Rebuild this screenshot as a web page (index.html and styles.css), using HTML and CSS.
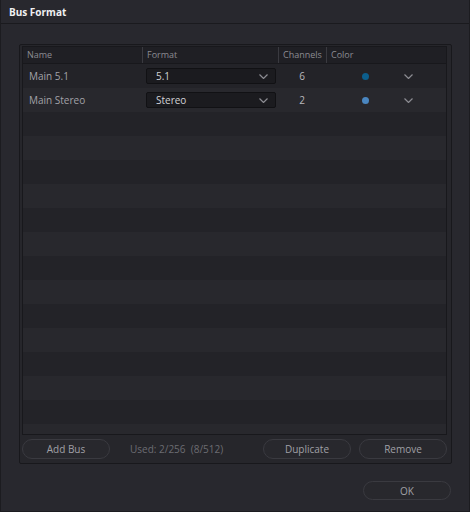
FILE: index.html
```html
<!DOCTYPE html>
<html>
<head>
<meta charset="utf-8">
<link rel="stylesheet" href="styles.css">
</head>
<body>
<div class="window">
  <div class="titlebar">Bus Format</div>
  <div class="content">
    <div class="panel">
      <div class="table">
        <div class="thead">
          <div class="th">Name</div>
          <div class="th">Format</div>
          <div class="th">Channels</div>
          <div class="th">Color</div>
        </div>
        <div class="tbody">
          <div class="row">
            <div class="cell name">Main 5.1</div>
            <div class="cell"><div class="combo"><span>5.1</span><svg class="chev" width="9" height="5" viewBox="0 0 9 5"><path d="M0.5 0.5 L4.5 4.5 L8.5 0.5" fill="none" stroke="#8c8c92" stroke-width="1.2"/></svg></div></div>
            <div class="cell num">6</div>
            <div class="cell color"><span class="dot dark"></span><svg class="chev" width="9" height="5" viewBox="0 0 9 5"><path d="M0.5 0.5 L4.5 4.5 L8.5 0.5" fill="none" stroke="#8c8c92" stroke-width="1.2"/></svg></div>
          </div>
          <div class="row">
            <div class="cell name">Main Stereo</div>
            <div class="cell"><div class="combo"><span>Stereo</span><svg class="chev" width="9" height="5" viewBox="0 0 9 5"><path d="M0.5 0.5 L4.5 4.5 L8.5 0.5" fill="none" stroke="#8c8c92" stroke-width="1.2"/></svg></div></div>
            <div class="cell num">2</div>
            <div class="cell color"><span class="dot light"></span><svg class="chev" width="9" height="5" viewBox="0 0 9 5"><path d="M0.5 0.5 L4.5 4.5 L8.5 0.5" fill="none" stroke="#8c8c92" stroke-width="1.2"/></svg></div>
          </div>
          <div class="row"></div><div class="row"></div><div class="row"></div>
          <div class="row"></div><div class="row"></div><div class="row"></div>
          <div class="row"></div><div class="row"></div><div class="row"></div>
          <div class="row"></div><div class="row"></div><div class="row"></div>
          <div class="row"></div><div class="row"></div>
        </div>
      </div>
      <div class="actions">
        <button class="btn add">Add Bus</button>
        <span class="used">Used: 2/256&nbsp; (8/512)</span>
        <button class="btn dup">Duplicate</button>
        <button class="btn rem">Remove</button>
      </div>
    </div>
    <div class="footer">
      <button class="btn ok">OK</button>
    </div>
  </div>
</div>
</body>
</html>
```

FILE: styles.css
```css
* { box-sizing: border-box; }

html, body {
  margin: 0;
  padding: 0;
  background: #28282e;
}

body {
  font-family: "Open Sans", "Noto Sans", sans-serif;
  font-size: 10px;
  color: #a2a2a8;
}

.window {
  width: 470px;
  height: 512px;
  background: #28282e;
  border-left: 1px solid #1c1c20;
  border-right: 1px solid #1c1c20;
  border-bottom: 1px solid #1c1c20;
  display: flex;
  flex-direction: column;
  overflow: hidden;
}

.titlebar {
  height: 24px;
  flex: none;
  padding: 5px 0 0 8px;
  background: #28282e;
  border-bottom: 1px solid #1a1a1e;
  color: #f0f0f2;
  font-weight: 700;
  font-size: 10px;
  line-height: 14px;
}

.content {
  padding: 20px 17px 0 18px;
  display: flex;
  flex-direction: column;
}

.panel {
  height: 420px;
  background: #26262b;
  border: 1px solid #18181c;
  border-radius: 2px;
  padding: 1px 4px 6px 2px;
  display: flex;
  flex-direction: column;
}

.table {
  height: 389px;
  flex: none;
  border: 1px solid #18181c;
  display: flex;
  flex-direction: column;
  overflow: hidden;
}

.thead {
  height: 17px;
  flex: none;
  display: grid;
  grid-template-columns: 119px 136px 48px 1fr;
  background: #1f1f24;
  border-bottom: 1px solid #18181c;
}

.th {
  font-size: 9px;
  line-height: 16px;
  color: #8c8c92;
  padding-left: 4px;
  border-left: 1px solid #3a3a40;
  white-space: nowrap;
}

.th:first-child {
  border-left: none;
}

.tbody {
  flex: 1;
  display: flex;
  flex-direction: column;
}

.row {
  height: 24px;
  flex: none;
  display: grid;
  grid-template-columns: 119px 136px 48px 1fr;
  align-items: center;
  background: #232328;
}

.row:nth-child(even) {
  background: #28282d;
}

.cell.name {
  padding-left: 6px;
  color: #a2a2a8;
}

.combo {
  margin-left: 4px;
  width: 130px;
  height: 16px;
  background: #1b1b1f;
  border: 1px solid #111114;
  border-radius: 2px;
  display: flex;
  align-items: center;
  justify-content: space-between;
  padding: 0 7px 0 9px;
  color: #d2d2d6;
  line-height: 14px;
}

.cell.num {
  text-align: center;
  color: #b8b8bc;
}

.cell.color {
  display: flex;
  align-items: center;
  padding-left: 36px;
}

.dot {
  width: 7px;
  height: 7px;
  border-radius: 50%;
  display: block;
}

.dot.dark { background: #0c5e8c; }
.dot.light { background: #4a86c0; }

.cell.color .chev {
  margin-left: 35px;
}

.actions {
  margin-top: 4px;
  height: 20px;
  display: flex;
  align-items: center;
}

.btn {
  font-family: "Open Sans", "Noto Sans", sans-serif;
  font-size: 10px;
  color: #a0a0a6;
  background: #28282d;
  border: 1px solid #3a3a40;
  border-radius: 10px;
  height: 20px;
  padding: 1px 0 0;
  line-height: 17px;
}

.btn.add { width: 88px; }
.btn.dup { width: 88px; margin-left: auto; }
.btn.rem { width: 88px; margin-left: 8px; }

.used {
  margin-left: 20px;
  color: #6c6c72;
}

.footer {
  display: flex;
  justify-content: flex-end;
  padding-top: 17px;
}

.btn.ok {
  width: 88px;
  height: 19px;
  margin-right: 1px;
}
```
